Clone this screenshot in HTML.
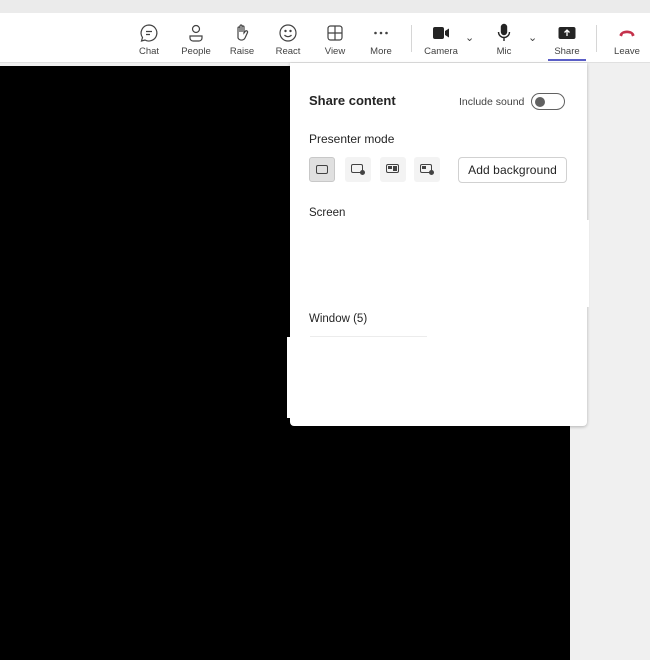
<!DOCTYPE html>
<html><head><style>
*{margin:0;padding:0;box-sizing:border-box}
body{width:650px;height:660px;position:relative;overflow:hidden;background:#f0f0f0;font-family:"Liberation Sans",sans-serif;color:#242424}
.top{position:absolute;left:0;top:0;width:650px;height:13px;background:#ebebeb}
.bar{position:absolute;left:0;top:13px;width:650px;height:50px;background:#fff;border-bottom:1px solid #e0e0e0}
.btn{position:absolute;top:10px;width:44px;text-align:center;font-size:9.5px;color:#424242}
.btn svg{display:block;margin:0 auto 3px;width:20px;height:20px}
.black{position:absolute;left:0;top:66px;width:570px;height:594px;background:#000}
.panel{position:absolute;left:290px;top:63px;width:297px;height:363px;background:#fff;border-radius:0 0 4px 4px;box-shadow:0 1px 3px rgba(0,0,0,.25)}
.t{position:absolute;font-size:12px}
.pm{position:absolute;top:94px;width:26px;height:25px;background:#f3f3f3;border-radius:3px}
</style></head><body>
<div class="top"></div>
<div class="bar">
<div class="btn" style="left:127px"><svg viewBox="0 0 20 20" fill="none" stroke="#424242" stroke-width="1.2"><path d="M10 2a8 8 0 1 1-4 15l-3.5 1 1-3.5A8 8 0 0 1 10 2z"/><path d="M7 8.5h6M7 11.5h4"/></svg>Chat</div>
<div class="btn" style="left:174px"><svg viewBox="0 0 20 20" fill="none" stroke="#424242" stroke-width="1.2"><circle cx="10" cy="6" r="3.5"/><path d="M4 13h12v2a3 3 0 0 1-3 3H7a3 3 0 0 1-3-3z"/></svg>People</div>
<div class="btn" style="left:220px"><svg viewBox="0 0 20 20" fill="none" stroke="#424242" stroke-width="1.2"><path d="M6 11V5a1 1 0 0 1 2 0v4V3a1 1 0 0 1 2 0v6V4a1 1 0 0 1 2 0v6l1.5-2a1.3 1.3 0 0 1 2 1.5L13 15a4 4 0 0 1-7 0z"/></svg>Raise</div>
<div class="btn" style="left:266px"><svg viewBox="0 0 20 20" fill="none" stroke="#424242" stroke-width="1.2"><circle cx="10" cy="10" r="8"/><circle cx="7.5" cy="8" r=".6" fill="#424242"/><circle cx="12.5" cy="8" r=".6" fill="#424242"/><path d="M6.5 12a4.5 4.5 0 0 0 7 0"/></svg>React</div>
<div class="btn" style="left:313px"><svg viewBox="0 0 20 20" fill="none" stroke="#424242" stroke-width="1.2"><rect x="3" y="3" width="14" height="14" rx="2.5"/><path d="M10 3v14M3 10h14"/></svg>View</div>
<div class="btn" style="left:359px"><svg viewBox="0 0 20 20" fill="#424242"><circle cx="4.5" cy="10" r="1.3"/><circle cx="10" cy="10" r="1.3"/><circle cx="15.5" cy="10" r="1.3"/></svg>More</div>
<div style="position:absolute;left:411px;top:12px;width:1px;height:27px;background:#d6d6d6"></div>
<div class="btn" style="left:419px"><svg viewBox="0 0 20 20" fill="#242424"><rect x="2" y="4" width="11" height="12" rx="2"/><path d="M14 8l4-2.5v9L14 12z"/></svg>Camera</div>
<div style="position:absolute;left:465px;top:18px;font-size:11px;color:#424242">&#8964;</div>
<div class="btn" style="left:482px"><svg viewBox="0 0 20 20" fill="none" stroke="#242424" stroke-width="1.4"><rect x="7.5" y="1.5" width="5" height="10" rx="2.5" fill="#242424"/><path d="M4.5 9a5.5 5.5 0 0 0 11 0M10 14.5V18"/></svg>Mic</div>
<div style="position:absolute;left:528px;top:18px;font-size:11px;color:#424242">&#8964;</div>
<div class="btn" style="left:545px"><svg viewBox="0 0 20 20"><rect x="1.5" y="4" width="17" height="12" rx="2" fill="#242424"/><path d="M10 13V7.5M7.5 9.5L10 7l2.5 2.5" stroke="#fff" stroke-width="1.3" fill="none"/></svg>Share</div>
<div style="position:absolute;left:548px;top:46px;width:38px;height:2px;background:#5b5fc7"></div>
<div style="position:absolute;left:596px;top:12px;width:1px;height:27px;background:#d6d6d6"></div>
<div class="btn" style="left:605px"><svg viewBox="0 0 20 20"><path d="M2.5 12.5c0-3 4-5 7.5-5s7.5 2 7.5 5l-2.5 1-1-2.5c-2.5-1-5.5-1-8 0l-1 2.5z" fill="#c4314b"/></svg>Leave</div>
</div>
<div class="black"></div>
<div class="panel">
<div class="t" style="left:19px;top:30px;font-size:13px;font-weight:bold">Share content</div>
<div class="t" style="left:169px;top:33px;font-size:10.5px;color:#424242">Include sound</div>
<div style="position:absolute;left:241px;top:30px;width:34px;height:17px;border:1px solid #616161;border-radius:9px"><div style="position:absolute;left:3px;top:2.5px;width:10px;height:10px;border-radius:50%;background:#616161"></div></div>
<div class="t" style="left:19px;top:69px;font-size:12px">Presenter mode</div>
<div class="pm" style="left:19px;background:#e0e0e0;border:1px solid #c8c8c8"><div style="position:absolute;left:6px;top:7px;width:12px;height:9px;border:1px solid #424242;border-radius:2px"></div></div>
<div class="pm" style="left:55px"><div style="position:absolute;left:6px;top:7px;width:12px;height:9px;border:1px solid #424242;border-radius:2px"></div><div style="position:absolute;left:15px;top:13px;width:5px;height:5px;border-radius:50%;background:#424242"></div></div>
<div class="pm" style="left:90px"><div style="position:absolute;left:6px;top:7px;width:13px;height:9px;border:1px solid #424242;border-radius:2px"></div><div style="position:absolute;left:8px;top:9px;width:4px;height:3px;background:#424242"></div><div style="position:absolute;left:13px;top:9px;width:4px;height:5px;background:#424242"></div></div>
<div class="pm" style="left:124px"><div style="position:absolute;left:6px;top:7px;width:12px;height:9px;border:1px solid #424242;border-radius:2px"></div><div style="position:absolute;left:8px;top:9px;width:4px;height:3px;background:#424242"></div><div style="position:absolute;left:15px;top:13px;width:5px;height:5px;border-radius:50%;background:#424242"></div></div>
<div style="position:absolute;left:168px;top:94px;width:109px;height:26px;border:1px solid #d1d1d1;border-radius:4px;font-size:12px;text-align:center;line-height:24px;letter-spacing:.1px">Add background</div>
<div class="t" style="left:19px;top:144px;font-size:11.5px">Screen</div>
<div class="t" style="left:19px;top:250px;font-size:11.5px">Window (5)</div>
<div style="position:absolute;left:20px;top:273px;width:117px;height:1px;background:#ececec"></div>
</div>
<div style="position:absolute;left:287px;top:337px;width:4px;height:81px;background:#fff"></div>
<div style="position:absolute;left:586px;top:220px;width:3px;height:87px;background:#fff"></div>
</body></html>
